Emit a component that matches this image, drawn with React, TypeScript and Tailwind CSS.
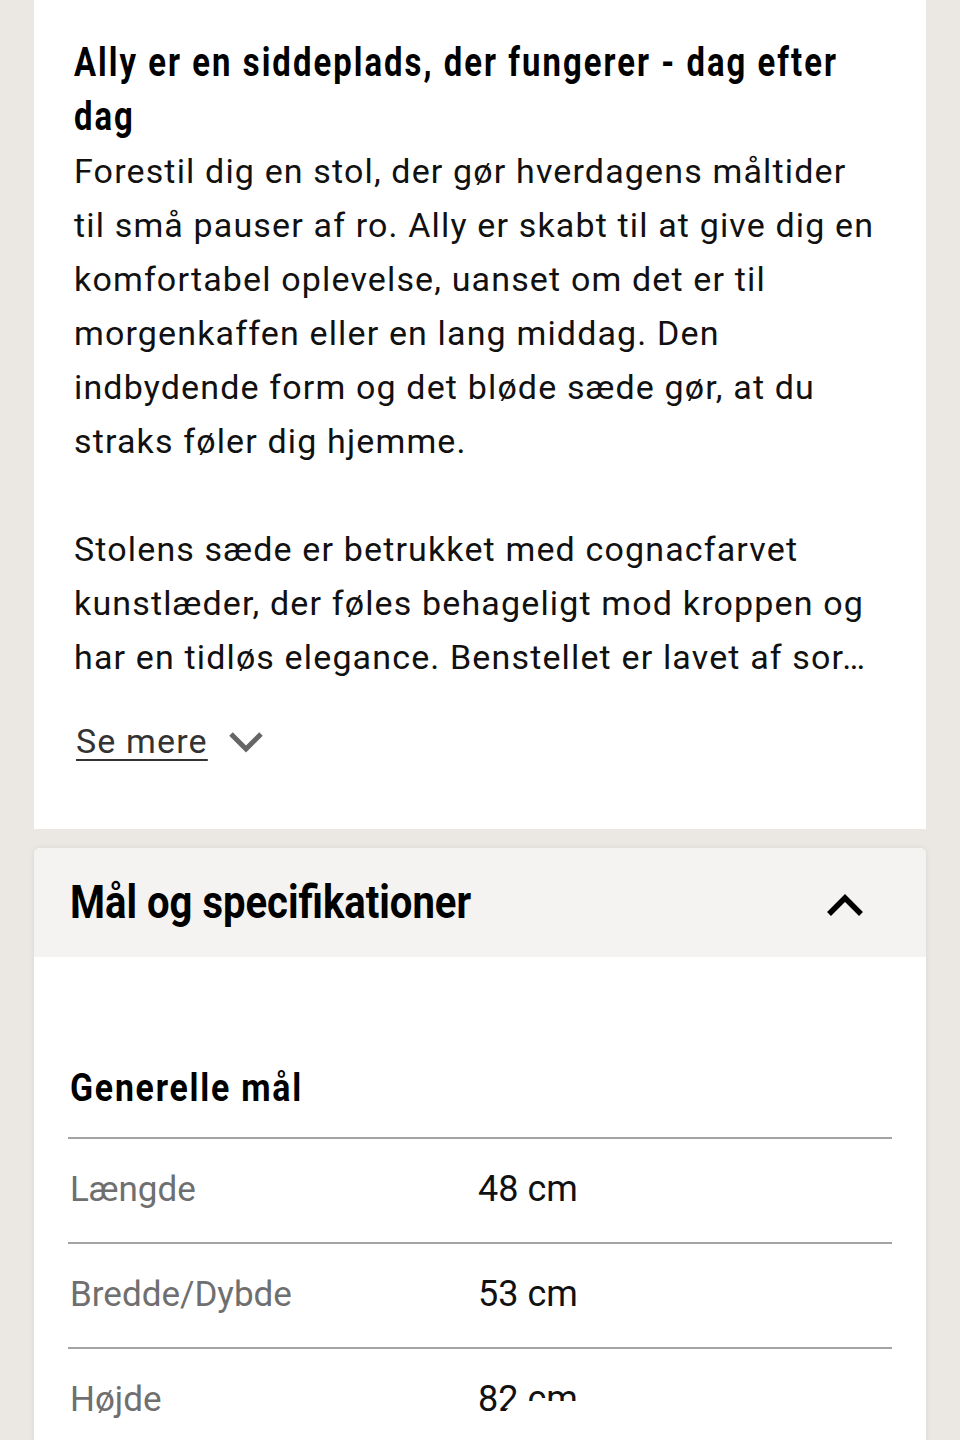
import React from "react";

const font = { fontFamily: 'Roboto, "Liberation Sans", sans-serif' };

const bodyLines1 = [
  "Forestil dig en stol, der gør hverdagens måltider",
  "til små pauser af ro. Ally er skabt til at give dig en",
  "komfortabel oplevelse, uanset om det er til",
  "morgenkaffen eller en lang middag. Den",
  "indbydende form og det bløde sæde gør, at du",
  "straks føler dig hjemme.",
];
const bodyLines2 = [
  "Stolens sæde er betrukket med cognacfarvet",
  "kunstlæder, der føles behageligt mod kroppen og",
  "har en tidløs elegance. Benstellet er lavet af sor…",
];

const rows = [
  ["Længde", "48 cm"],
  ["Bredde/Dybde", "53 cm"],
  ["Højde", "82 cm"],
];

export default function App() {
  return (
    <div className="relative w-[960px] h-[1440px] overflow-hidden bg-[#ebe8e3] text-black" style={font}>
      <div className="ml-[34px] w-[892px] bg-white pt-[36px] pb-[61px] pl-[40px] pr-[20px]">
        <div className="text-[40px] leading-[54px] font-bold tracking-[2.5px]">
          <div className="whitespace-nowrap inline-block origin-left scale-x-[0.82]">Ally er en siddeplads, der fungerer - dag efter</div>
          <div className="whitespace-nowrap origin-left scale-x-[0.82]">dag</div>
        </div>
        <div className="text-[34px] leading-[54px] tracking-[1.15px] text-[#111]">
          {bodyLines1.map((l) => (
            <div key={l} className="whitespace-nowrap">{l}</div>
          ))}
          <div className="h-[54px]" />
          {bodyLines2.map((l) => (
            <div key={l} className="whitespace-nowrap">{l}</div>
          ))}
        </div>
        <div className="mt-[30px] flex items-center gap-[20px] h-[54px] pl-[2px]">
          <span className="text-[34px] leading-[54px] tracking-[1.15px] text-[#333] underline underline-offset-[6px] decoration-[2px]">Se mere</span>
          <svg width="36" height="22" viewBox="0 0 36 22" className="mt-[2px]">
            <path d="M3 3 L18 18 L33 3" fill="none" stroke="#666" strokeWidth="5" />
          </svg>
        </div>
      </div>

      <div className="ml-[34px] mt-[19px] w-[892px] rounded-t-[6px] bg-white shadow-[0_0_6px_rgba(0,0,0,0.08)]">
        <div className="h-[109px] bg-[#f4f3f1] rounded-t-[6px] flex items-center justify-between pl-[36px] pr-[62px]">
          <span className="inline-block whitespace-nowrap origin-left scale-x-[0.87] text-[46px] font-bold">Mål og specifikationer</span>
          <svg width="38" height="24" viewBox="0 0 38 24" className="mt-[4px]">
            <path d="M3 21 L19 5 L35 21" fill="none" stroke="#000" strokeWidth="5.5" />
          </svg>
        </div>
        <div className="px-[34px] pt-[104px]">
          <div className="text-[38px] font-bold tracking-[2px] leading-[54px] pl-[2px]">
            <span className="inline-block whitespace-nowrap origin-left scale-x-[0.89]">Generelle mål</span>
          </div>
          <div className="mt-[22px]">
            {rows.map(([k, v]) => (
              <div key={k} className="border-t-[2px] border-[#a3a3a3] h-[105px] flex items-center pb-[2px]">
                <div className="flex items-baseline">
                  <span className="w-[410px] pl-[2px] text-[35px] text-[#6f6f6f]">{k}</span>
                  <span className="text-[36px] text-[#111]">{v}</span>
                </div>
              </div>
            ))}
          </div>
        </div>
      </div>

      <div className="absolute left-[498px] top-[1401px] w-[412px] h-[60px] bg-white rounded-tl-[30px]" />
    </div>
  );
}
